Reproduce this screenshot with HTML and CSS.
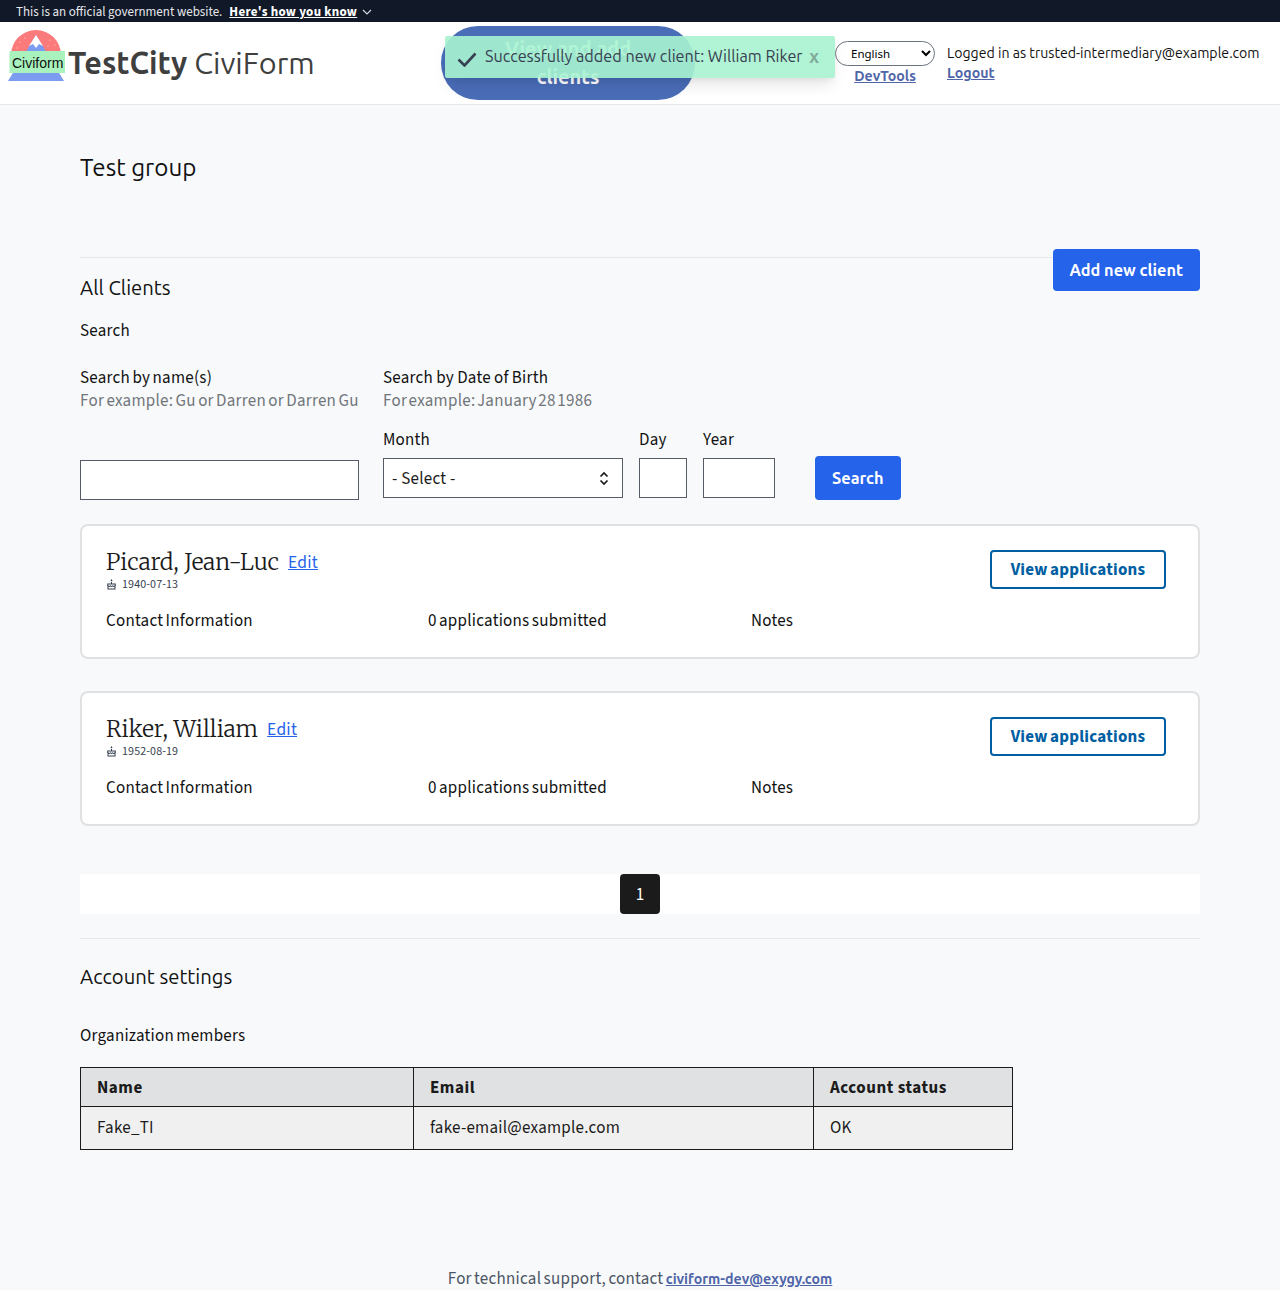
FILE: index.html
```html
<!DOCTYPE html>
<html lang="en">
<head>
  <meta charset="UTF-8" />
  <meta name="viewport" content="width=device-width, initial-scale=1" />
  <title>CiviForm - Clients</title>
  <link rel="stylesheet" href="styles.css">
</head>
<body>

  <div class="gov-banner">
    <span>This is an official government website.</span>
    <a href="#" class="gov-link">Here's how you know</a>
    <svg class="gov-chevron" width="10" height="6" viewBox="0 0 10 6"><path d="M1 1l4 4 4-4" fill="none" stroke="#d1d5db" stroke-width="1.2"/></svg>
  </div>

  <header class="site-header">
    <a href="#" class="brand">
      <svg class="brand-logo" width="58" height="52" viewBox="0 0 58 52">
        <path d="M3 25a25 25 0 0 1 50 0z" fill="#fb7a7c"/>
        <path d="M0 51L28 5l28 46z" fill="#7b9cf0"/>
        <path d="M28 5l-7 11 4-2 3 4 3-4 4 2z" fill="#fff"/>
        <g fill="#fff" opacity="0.7">
          <circle cx="12" cy="12" r="0.6"/><circle cx="17" cy="8" r="0.6"/><circle cx="42" cy="10" r="0.6"/>
          <circle cx="47" cy="15" r="0.6"/><circle cx="9" cy="18" r="0.6"/><circle cx="40" cy="16" r="0.6"/>
        </g>
        <rect x="1.500" y="21" width="55.500" height="22" fill="#a9f2bd"/>
      </svg>
      <span class="brand-logo-text">Civiform</span>
      <span class="brand-title"><b>TestCity</b> CiviForm</span>
    </a>
    <a href="#" class="nav-pill">View and add clients</a>
    <div class="lang-box">
      <select class="lang-select"><option>English</option></select>
      <a href="#" class="header-link">DevTools</a>
    </div>
    <div class="user-box">
      <div>Logged in as trusted-intermediary@example.com</div>
      <a href="#" class="header-link">Logout</a>
    </div>
  </header>

  <div class="toast">
    <svg width="20" height="16" viewBox="0 0 20 16"><path d="M1.500 8.500l6 6L18.500 2.500" fill="none" stroke="#374151" stroke-width="2.600"/></svg>
    <span>Successfully added new client: William Riker</span>
    <span class="toast-close">x</span>
  </div>

  <main class="page">
    <section class="group-title">
      <h1>Test group</h1>
    </section>

    <hr class="rule">

    <a href="#" class="btn btn-add">Add new client</a>
    <h2 class="all-clients">All Clients</h2>
    <div class="search-title">Search</div>

    <form class="search-form">
      <div class="field-name">
        <label>Search by name(s)</label>
        <div class="hint">For example: Gu or Darren or Darren Gu</div>
        <input type="text" class="text-input name-input">
      </div>
      <div class="field-dob">
        <label>Search by Date of Birth</label>
        <div class="hint">For example: January 28 1986</div>
        <div class="dob-row">
          <div>
            <label>Month</label>
            <div class="fake-select">
              <span>- Select -</span>
              <svg width="10" height="17" viewBox="0 0 10 17"><path d="M1.500 6.500L5 3l3.500 3.500M1.500 10.500L5 14l3.500-3.500" fill="none" stroke="#1b1b1b" stroke-width="1.700"/></svg>
            </div>
          </div>
          <div>
            <label>Day</label>
            <input type="text" class="text-input day-input">
          </div>
          <div>
            <label>Year</label>
            <input type="text" class="text-input year-input">
          </div>
        </div>
      </div>
      <button type="button" class="btn btn-search">Search</button>
    </form>

    <div class="client-card">
      <div class="card-top">
        <div>
          <div class="client-line">
            <span class="client-name">Picard, Jean-Luc</span>
            <a href="#" class="edit-link">Edit</a>
          </div>
          <div class="client-dob">
            <svg width="11" height="11" viewBox="0 0 11 11"><path d="M5.500 0l.9 1.400a.9.900 0 0 1-1.800 0zM5 3h1v1.500h3.800V7H9.500v3.500h-8V7h-.3V4.500H5z" fill="#374151"/><path d="M2.200 5.500v.8l1.100.600 1.100-.600 1.100.600 1.100-.600 1.100.600 1.100-.600v-.8zM2.500 7.700v1.800h6V7.700l-.7.300-1.200-.600-1.100.600-1.100-.600-1.200.600z" fill="#fff"/></svg>
            <span>1940-07-13</span>
          </div>
        </div>
        <a href="#" class="btn-outline">View applications</a>
      </div>
      <div class="card-cols">
        <div class="col-contact">Contact Information</div>
        <div class="col-apps">0 applications submitted</div>
        <div>Notes</div>
      </div>
    </div>

    <div class="client-card">
      <div class="card-top">
        <div>
          <div class="client-line">
            <span class="client-name">Riker, William</span>
            <a href="#" class="edit-link">Edit</a>
          </div>
          <div class="client-dob">
            <svg width="11" height="11" viewBox="0 0 11 11"><path d="M5.500 0l.9 1.400a.9.900 0 0 1-1.800 0zM5 3h1v1.500h3.800V7H9.500v3.500h-8V7h-.3V4.500H5z" fill="#374151"/><path d="M2.200 5.500v.8l1.100.600 1.100-.600 1.100.600 1.100-.600 1.100.600 1.100-.600v-.8zM2.500 7.700v1.800h6V7.700l-.7.300-1.200-.600-1.100.600-1.100-.600-1.200.600z" fill="#fff"/></svg>
            <span>1952-08-19</span>
          </div>
        </div>
        <a href="#" class="btn-outline">View applications</a>
      </div>
      <div class="card-cols">
        <div class="col-contact">Contact Information</div>
        <div class="col-apps">0 applications submitted</div>
        <div>Notes</div>
      </div>
    </div>

    <div class="pager"><span class="pager-num">1</span></div>

    <hr class="rule rule-account">

    <h2 class="account-title">Account settings</h2>
    <div class="members-title">Organization members</div>

    <table class="members">
      <thead>
        <tr><th class="col-a">Name</th><th class="col-b">Email</th><th class="col-c">Account status</th></tr>
      </thead>
      <tbody>
        <tr><td>Fake_TI</td><td>fake-email@example.com</td><td>OK</td></tr>
      </tbody>
    </table>
  </main>

  <footer class="site-footer">
    For technical support, contact <a href="#" class="header-link">civiform-dev@exygy.com</a>
  </footer>

</body>
</html>
```

FILE: styles.css
```css
* {
  box-sizing: border-box;
}
html, body {
  margin: 0;
  padding: 0;
}
body {
  position: relative;
  height: 1290px;
  overflow: hidden;
  background-color: #f8f9fb;
  color: #111;
  font-family: "Source Sans 3", "Noto Sans CJK JP", sans-serif;
  font-size: 17px;
  letter-spacing: 0.25px;
  word-spacing: -1.3px;
}
/* the Ubuntu bits keep normal spacing */
.gov-banner, .site-header, .toast, h1, h2, .btn, .header-link, .client-name {
  letter-spacing: 0;
  word-spacing: 0;
}
.gov-banner {
  display: flex;
  align-items: center;
  height: 22px;
  padding-top: 2px;
  padding-left: 16px;
  background-color: #111827;
  color: #e5e7eb;
  font-size: 13px;
}
.gov-link {
  margin-left: 7px;
  color: #fff;
  font-weight: 700;
  letter-spacing: 0.3px;
}
.gov-chevron {
  margin-left: 5px;
}
.site-header {
  position: relative;
  display: flex;
  height: 83px;
  background-color: #fff;
  border-bottom: 1px solid #e5e7eb;
}
.brand {
  position: relative;
  display: flex;
  align-items: center;
  width: 433px;
  padding-left: 8px;
  color: #3f3f3f;
  text-decoration: none;
}
.brand-logo {
  flex: none;
  align-self: flex-start;
  margin-top: 8px;
}
.brand-logo-text {
  position: absolute;
  left: 12px;
  top: 33px;
  color: #111;
  font-family: "Liberation Sans", sans-serif;
  font-size: 14px;
}
.brand-title {
  margin: 0 0 2px 2px;
  font-family: "Ubuntu", "Noto Sans", sans-serif;
  font-size: 30.6px;
}
.nav-pill {
  display: flex;
  align-items: center;
  justify-content: center;
  flex: none;
  width: 254px;
  height: 74px;
  margin: 4px 0 0 8px;
  padding: 0 50px;
  border-radius: 37px;
  background-color: #4a6db8;
  color: #fff;
  font-family: "Ubuntu", "Noto Sans", sans-serif;
  font-size: 20px;
  font-weight: 700;
  line-height: 28px;
  text-align: center;
  text-decoration: none;
}
.lang-box {
  display: flex;
  flex-direction: column;
  align-items: center;
  width: 100px;
  margin: 19px 0 0 140px;
}
.lang-select {
  width: 100px;
  height: 25px;
  padding: 0 0 1px 11px;
  background-color: #fff;
  border: 1px solid #6b7280;
  border-radius: 13px;
  font-family: "Noto Sans", sans-serif;
  font-size: 11.500px;
}
.header-link {
  color: #4f65a8;
  font-family: "Ubuntu", "Noto Sans", sans-serif;
  font-size: 14.200px;
  font-weight: 700;
}
.lang-box .header-link {
  margin-top: 2px;
}
.user-box {
  margin: 21px 0 0 12px;
  font-family: "Ubuntu", "Noto Sans", sans-serif;
  font-size: 14.130px;
  line-height: 20px;
  white-space: nowrap;
}
.toast {
  position: absolute;
  left: 445px;
  top: 36px;
  display: flex;
  align-items: center;
  width: 390px;
  height: 42px;
  padding: 0 16px 2px 12px;
  border-radius: 2px;
  background-color: rgba(167, 243, 208, 0.9);
  box-shadow: 0 10px 15px -3px rgba(0, 0, 0, 0.1), 0 4px 6px -2px rgba(0, 0, 0, 0.05);
  color: #374151;
  font-family: "Ubuntu", "Noto Sans", sans-serif;
  font-size: 16.200px;
}
.toast svg {
  flex: none;
  margin: 5px 8px 0 0;
}
.toast-close {
  margin-left: auto;
  color: #7fa99a;
  font-size: 18px;
  font-weight: 700;
}
.page {
  width: 1120px;
  margin: 0 auto;
}
.group-title {
  height: 128px;
  padding-top: 46px;
}
h1 {
  margin: 0;
  font-family: "Ubuntu", "Noto Sans", sans-serif;
  font-size: 24.200px;
  font-weight: 400;
  line-height: 32px;
}
.rule {
  height: 1px;
  margin: 24px 0 0;
  background-color: #e5e7eb;
  border: 0;
}
.btn {
  display: inline-block;
  padding: 0 17px;
  border: 0;
  border-radius: 4px;
  background-color: #2563eb;
  color: #fff;
  font-family: "Ubuntu", "Noto Sans", sans-serif;
  font-size: 16.300px;
  font-weight: 700;
  text-decoration: none;
}
.btn-add {
  float: right;
  height: 42px;
  margin-top: -9px;
  padding-left: 16px;
  line-height: 42px;
}
h2 {
  margin: 0;
  font-family: "Ubuntu", "Noto Sans", sans-serif;
  font-size: 20.250px;
  font-weight: 400;
}
.all-clients {
  padding-top: 16px;
  line-height: 28px;
}
.search-title {
  margin-top: 17px;
  line-height: 24px;
}
.search-form {
  display: flex;
  align-items: flex-end;
  margin-top: 23px;
}
.field-name {
  width: 279px;
  margin-right: 24px;
  white-space: nowrap;
}
label {
  display: block;
  line-height: 24px;
}
.hint {
  margin-top: -1px;
  color: #71767a;
  line-height: 24px;
}
.text-input {
  display: block;
  height: 40px;
  background-color: #fff;
  border: 1px solid #565c65;
  border-radius: 0;
}
.name-input {
  width: 279px;
  margin-top: 47px;
}
.field-dob {
  margin-bottom: 2px;
}
.field-dob > label {
  word-spacing: -0.5px;
}
.field-dob > .hint {
  word-spacing: -2.1px;
}
.dob-row {
  display: flex;
  gap: 16px;
  margin-top: 15px;
}
.dob-row label {
  margin-bottom: 6px;
}
.fake-select {
  display: flex;
  align-items: center;
  justify-content: space-between;
  width: 240px;
  height: 40px;
  padding: 2px 13px 0 8px;
  background-color: #fff;
  border: 1px solid #565c65;
  color: #1b1b1b;
  word-spacing: 0;
}
.fake-select svg {
  margin-top: -2px;
}
.day-input {
  width: 48px;
}
.year-input {
  width: 72px;
}
.btn-search {
  height: 44px;
  margin-left: 40px;
}
.client-card {
  height: 135px;
  margin-top: 24px;
  padding: 24px 32px 0 24px;
  background-color: #fff;
  border: 2px solid #dfe1e2;
  border-radius: 8px;
}
.client-card + .client-card {
  margin-top: 32px;
}
.card-top {
  display: flex;
  justify-content: space-between;
  align-items: flex-start;
  height: 40px;
}
.client-line {
  display: flex;
  align-items: center;
  height: 24px;
}
.client-name {
  color: #1b1b1b;
  font-family: "Merriweather", "DejaVu Serif", serif;
  font-size: 22.800px;
  font-weight: 300;
}
.edit-link {
  margin-left: 9px;
  color: #2563eb;
  font-size: 17.500px;
}
.client-dob {
  display: flex;
  align-items: center;
  gap: 5px;
  margin-top: 2px;
  color: #374151;
  font-size: 12px;
  letter-spacing: 0.1px;
}
.btn-outline {
  width: 176px;
  height: 39px;
  border: 2px solid #005ea2;
  border-radius: 4px;
  background-color: #fff;
  color: #005ea2;
  font-weight: 700;
  line-height: 37px;
  text-align: center;
  text-decoration: none;
}
.card-cols {
  display: flex;
  margin-top: 19px;
  line-height: 24px;
}
.col-contact {
  width: 322px;
}
.col-apps {
  width: 323px;
}
.pager {
  display: flex;
  justify-content: center;
  height: 40px;
  margin-top: 48px;
  background-color: #fff;
}
.pager-num {
  width: 40px;
  height: 40px;
  border-radius: 4px;
  background-color: #1b1b1b;
  color: #fff;
  line-height: 42px;
  text-align: center;
}
.rule-account {
  margin-top: 24px;
}
.account-title {
  margin-top: 24px;
  line-height: 28px;
}
.members-title {
  margin-top: 33px;
  line-height: 24px;
}
.members {
  width: 932px;
  margin-top: 19px;
  border-collapse: collapse;
  table-layout: fixed;
}
.members th, .members td {
  padding: 0 16px;
  border: 1px solid #1b1b1b;
  color: #1b1b1b;
  font-weight: 400;
  text-align: left;
}
.members th {
  height: 39px;
  padding-top: 2px;
  background-color: #dfe1e2;
  font-weight: 700;
  letter-spacing: 0.55px;
  word-spacing: 0;
}
.members td {
  height: 43px;
  background-color: #f0f0f0;
}
.col-a {
  width: 333px;
}
.col-b {
  width: 400px;
}
.col-c {
  width: 199px;
}
.site-footer {
  position: absolute;
  left: 0;
  right: 0;
  top: 1269px;
  color: #4b5563;
  line-height: 20px;
  text-align: center;
}
```
